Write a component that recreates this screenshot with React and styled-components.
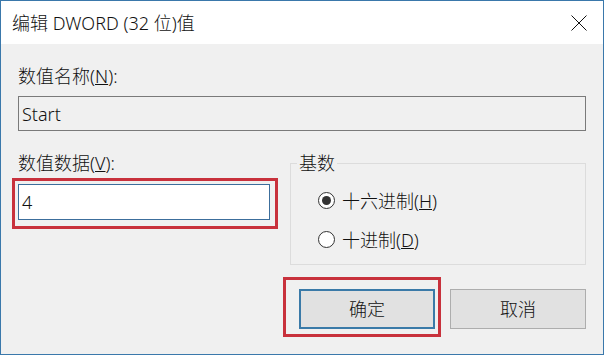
import React from 'react'
import styled, { createGlobalStyle } from 'styled-components'

const GlobalStyle = createGlobalStyle`
  html, body {
    margin: 0;
    padding: 0;
    background: #f0f0f0;
  }
  * {
    box-sizing: border-box;
  }
`

const Window = styled.div`
  width: 604px;
  height: 355px;
  display: flex;
  flex-direction: column;
  border: 1px solid #3a78ab;
  background: #f0f0f0;
  font-family: "Noto Sans", "Noto Sans CJK SC", sans-serif;
  font-size: 18px;
  font-weight: 300;
  color: #111;
`

const TitleBar = styled.div`
  height: 43px;
  flex-shrink: 0;
  display: flex;
  align-items: center;
  justify-content: space-between;
  padding: 0 16px 0 11px;
  background: #fff;
`

const Title = styled.span`
  line-height: 24px;
`

const CloseButton = styled.span`
  display: flex;
  width: 16px;
  height: 16px;
  margin-top: 1px;
`

const Body = styled.div`
  flex: 1;
  display: flex;
  flex-direction: column;
  padding: 20px 17px 0 17px;
`

const Label = styled.div`
  line-height: 24px;
  height: 24px;
  white-space: nowrap;
`

const TextBox = styled.div`
  height: ${(props) => props.height || 35}px;
  display: flex;
  align-items: center;
  padding-left: 3px;
  border: 1px solid ${(props) => (props.focused ? '#3c6e9c' : '#7a7a7a')};
  background: ${(props) => (props.focused ? '#fff' : '#f0f0f0')};
  line-height: 24px;
`

const NameBox = styled(TextBox)`
  margin-top: 8px;
`

const Row = styled.div`
  margin-top: 20px;
  display: grid;
  grid-template-columns: 252px 1fr;
  column-gap: 20px;
  align-items: start;
`

const Column = styled.div`
  display: flex;
  flex-direction: column;
`

const Marked = styled.div`
  position: relative;
  margin-top: ${(props) => props.top || 0}px;
`

const Highlight = styled.div`
  position: absolute;
  top: ${(props) => props.t}px;
  left: ${(props) => props.l}px;
  right: ${(props) => props.r}px;
  bottom: ${(props) => props.b}px;
  border: 3px solid #c8313c;
  pointer-events: none;
`

const GroupBox = styled.fieldset`
  margin: 0;
  padding: 6px 6px 5px 6px;
  border: 1px solid #dcdcdc;
  min-width: 0;
`

const GroupLegend = styled.legend`
  padding: 0 2px;
  line-height: 24px;
`

const RadioRow = styled.label`
  height: 39px;
  display: flex;
  align-items: center;
  gap: 7px;
  margin-left: 21px;
  line-height: 24px;
`

const RadioCircle = styled.span`
  width: 17px;
  height: 17px;
  border-radius: 50%;
  border: 1px solid #333;
  background: #fff;
  display: flex;
  align-items: center;
  justify-content: center;

  &::after {
    content: '';
    width: 9px;
    height: 9px;
    border-radius: 50%;
    background: ${(props) => (props.checked ? '#333' : 'transparent')};
  }
`

const ButtonRow = styled.div`
  margin-top: 24px;
  display: flex;
  justify-content: flex-end;
  gap: 15px;
`

const Button = styled.div`
  width: 136px;
  height: 40px;
  display: flex;
  align-items: center;
  justify-content: center;
  background: #e1e1e1;
  border: ${(props) => (props.focused ? '2px solid #3a7aa8' : '1px solid #adadad')};
  line-height: 24px;
`

function CloseIcon() {
  return (
    <svg width="16" height="16" viewBox="0 0 16 16">
      <path d="M0.5 0.5 L15.5 15.5 M15.5 0.5 L0.5 15.5" stroke="#111" strokeWidth="1" fill="none" />
    </svg>
  )
}

function Radio({ checked, children }) {
  return (
    <RadioRow>
      <RadioCircle checked={checked} />
      <span>{children}</span>
    </RadioRow>
  )
}

export default function App() {
  return (
    <>
      <GlobalStyle />
      <Window>
        <TitleBar>
          <Title>编辑 DWORD (32 位)值</Title>
          <CloseButton>
            <CloseIcon />
          </CloseButton>
        </TitleBar>

        <Body>
          <Label>
            数值名称(<u>N</u>):
          </Label>
          <NameBox>Start</NameBox>

          <Row>
            <Column>
              <Label>
                数值数据(<u>V</u>):
              </Label>
              <Marked top={9}>
                <TextBox focused height={36}>4</TextBox>
                <Highlight t={-6} l={-6} r={-8} b={-9} />
              </Marked>
            </Column>

            <GroupBox>
              <GroupLegend>基数</GroupLegend>
              <Radio checked>
                十六进制(<u>H</u>)
              </Radio>
              <Radio>
                十进制(<u>D</u>)
              </Radio>
            </GroupBox>
          </Row>

          <ButtonRow>
            <Marked>
              <Button focused>确定</Button>
              <Highlight t={-12} l={-16} r={-6} b={-8} />
            </Marked>
            <Button>取消</Button>
          </ButtonRow>
        </Body>
      </Window>
    </>
  )
}
